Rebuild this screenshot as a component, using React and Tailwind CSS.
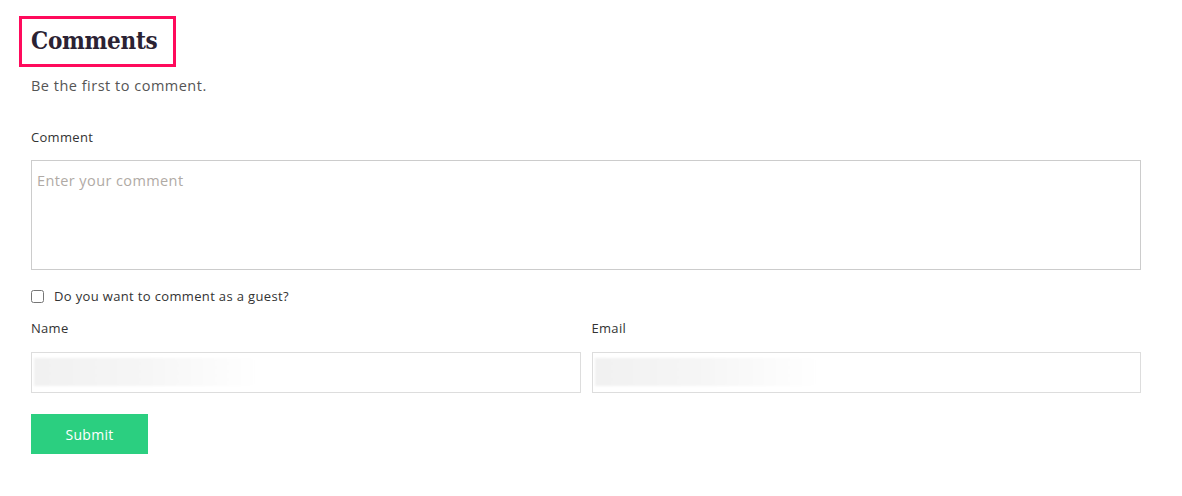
import React, { useState } from "react";

const App = () => {
  const [guest, setGuest] = useState(false);

  return (
    <div className="min-h-screen bg-white font-['Open_Sans',sans-serif]">
      <div className="w-[1110px] ml-[31px] pt-[16px]">
        {/* HEADING (highlighted) */}
        <div className="inline-block -ml-[12px] border-[3px] border-[#ff0a5c] pl-[9px] pr-[16px] pt-[6px] pb-[8px]">
          <h2 className="font-['DejaVu_Serif_Condensed','DejaVu_Serif',serif] font-bold text-[24px] leading-[31px] text-[#2b2233] tracking-[-0.3px]">
            Comments
          </h2>
        </div>

        <p className="mt-[9px] text-[14.5px] leading-[20px] tracking-[0.5px] text-[#555]">Be the first to comment.</p>

        <form className="mt-[32px]" onSubmit={(e) => e.preventDefault()}>
          <label className="block text-[13px] leading-[18px] tracking-[0.3px] text-[#333]">Comment</label>
          <textarea
            placeholder="Enter your comment"
            className="mt-[14px] block w-full h-[110px] border border-[#ccc] px-[5px] py-[10px] text-[14.5px] leading-[20px] tracking-[0.4px] text-[#333] placeholder:text-[#b0aaa5] resize-none outline-none"
          />

          <label className="mt-[17px] flex items-center gap-[10px] text-[13px] leading-[18px] tracking-[0.35px] text-[#333]">
            <input
              type="checkbox"
              checked={guest}
              onChange={(e) => setGuest(e.target.checked)}
              className="w-[13px] h-[13px] m-0"
            />
            Do you want to comment as a guest?
          </label>

          <div className="mt-[14px] grid grid-cols-2 gap-[11px]">
            {["Name", "Email"].map((f) => (
              <div key={f}>
                <label className="block text-[13px] leading-[18px] tracking-[0.3px] text-[#333]">{f}</label>
                <div className="relative mt-[15px] h-[41px] border border-[#ddd]">
                  {/* blurred autofill content */}
                  <div className="absolute left-[2px] top-[5px] w-[222px] h-[28px] bg-gradient-to-r from-[#f1f1f1] via-[#f6f6f6] to-white blur-[1px]" />
                </div>
              </div>
            ))}
          </div>

          <button
            type="submit"
            className="mt-[21px] w-[117px] h-[40px] bg-[#2bcf80] text-white text-[14px] font-medium tracking-[0.3px]"
          >
            Submit
          </button>
        </form>
      </div>
    </div>
  );
};

export default App;
